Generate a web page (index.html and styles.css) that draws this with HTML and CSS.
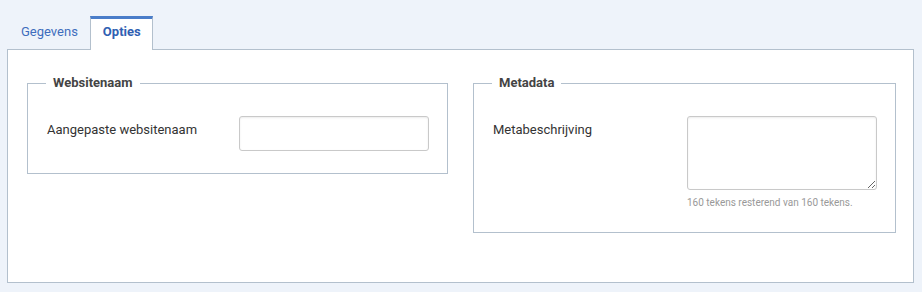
FILE: index.html
```html
<!DOCTYPE html>
<html lang="nl">
<head>
  <meta charset="UTF-8">
  <meta name="viewport" content="width=device-width, initial-scale=1.0">
  <title>Opties</title>
  <link rel="stylesheet" href="styles.css">
</head>
<body>
  <ul class="tabs">
    <li class="tab">Gegevens</li>
    <li class="tab active">Opties</li>
  </ul>

  <div class="panel">
    <fieldset class="group">
      <legend>Websitenaam</legend>
      <div class="row">
        <label for="siteName">Aangepaste websitenaam</label>
        <div class="control">
          <input type="text" id="siteName" class="field">
        </div>
      </div>
    </fieldset>

    <fieldset class="group">
      <legend>Metadata</legend>
      <div class="row">
        <label for="metaDesc">Metabeschrijving</label>
        <div class="control">
          <textarea id="metaDesc" class="field area"></textarea>
          <div class="help">160 tekens resterend van 160 tekens.</div>
        </div>
      </div>
    </fieldset>
  </div>
</body>
</html>
```

FILE: styles.css
```css
body {
  margin: 0;
  padding: 16px 8px 9px 7px;
  background-color: #eef3fa;
  font-family: Roboto, "Liberation Sans", Arial, sans-serif;
  font-size: 13px;
  color: #333;
}
.tabs {
  display: flex;
  align-items: flex-end;
  list-style: none;
  margin: 0 0 -1px 0;
  padding: 0;
  position: relative;
}
.tab {
  padding: 4px 11px 9px 13px;
  line-height: 18px;
  color: #3e6dbd;
  border: 1px solid transparent;
  border-top: none;
  border-bottom: none;
}
.tab.active {
  padding: 4px 11px 9px 12px;
  background-color: #fff;
  border-color: #b3c0cd;
  border-top: 3px solid #4a7dc9;
  color: #2f60b2;
  font-weight: bold;
}
.panel {
  display: grid;
  grid-template-columns: 421px 1fr;
  gap: 25px;
  align-items: start;
  background-color: #fff;
  border: 1px solid #b3c0cd;
  padding: 25px 17px 49px 19px;
}
.group {
  margin: 0;
  padding: 25px 18px 22px 19px;
  border: 1px solid #b3c0cd;
  min-width: 0;
}
.group legend {
  padding: 0 7px;
  margin-left: -1px;
  font-weight: bold;
  line-height: 16px;
  color: #444;
}
.row {
  display: flex;
  align-items: flex-start;
}
.row label {
  flex: 1;
  padding-top: 5px;
  line-height: 18px;
  color: #333;
}
.control {
  width: 190px;
}
.field {
  display: block;
  box-sizing: border-box;
  width: 190px;
  height: 35px;
  margin: 0;
  border: 1px solid #c9c9c9;
  border-radius: 3px;
  box-shadow: inset 0 1px 2px rgba(0, 0, 0, 0.08);
  background: #fff;
  font-family: inherit;
  font-size: 13px;
}
.area {
  height: 74px;
}
.help {
  margin-top: 5px;
  font-size: 10px;
  line-height: 15px;
  color: #999;
}
```
